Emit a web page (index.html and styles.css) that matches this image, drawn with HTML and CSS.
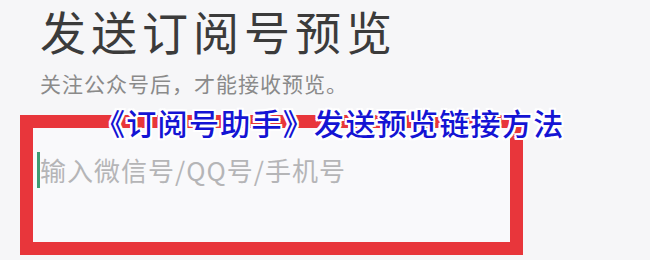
FILE: index.html
```html
<!DOCTYPE html>
<html lang="zh-CN">
<head>
  <meta charset="UTF-8" />
  <title>发送订阅号预览</title>
  <meta name="viewport" content="width=device-width, initial-scale=1.0" />
  <link rel="stylesheet" href="styles.css">
</head>
<body>

<div class="page">
  <h1 class="title">发送订阅号预览</h1>
  <p class="hint">关注公众号后，才能接收预览。</p>

  <div class="field">
    <span class="cursor"></span>
    <span class="placeholder">输入微信号/QQ号/手机号</span>
  </div>

  <!-- caption laid over the screenshot -->
  <div class="caption">《订阅号助手》发送预览链接方法</div>
</div>

</body>
</html>
```

FILE: styles.css
```css
body {
  margin: 0;
  font-family: "Noto Sans CJK SC", "Noto Sans", sans-serif;
  background-color: #f6f6f8;
}
.page {
  position: relative;
  height: 260px;
  padding-left: 20px;
  overflow: hidden;
}
.title {
  margin: 0 0 0 20px;
  font-size: 46px;
  font-weight: 400;
  line-height: 60px;
  letter-spacing: 5px;
  color: #3b3b3b;
}
.hint {
  margin: 11px 0 0 20px;
  font-size: 21px;
  line-height: 24px;
  letter-spacing: 1px;
  color: #8a8a8a;
}
.field {
  box-sizing: border-box;
  width: 503px;
  height: 140px;
  margin-top: 20px;
  padding: 24px 0 0 4px;
  border: 13px solid #e8363b;
  background-color: #f9f9fb;
  display: flex;
  align-items: flex-start;
}
.cursor {
  width: 3px;
  height: 36px;
  background-color: #3f9c73;
}
.placeholder {
  font-size: 26px;
  line-height: 36px;
  letter-spacing: 1px;
  color: #b5b5b7;
}
.caption {
  position: absolute;
  left: 95px;
  top: 104px;
  font-size: 30px;
  font-weight: 500;
  line-height: 36px;
  letter-spacing: 1.3px;
  color: #1414d4;
  text-shadow: -2px 0 #fff, 2px 0 #fff, 0 -2px #fff, 0 2px #fff,
    -2px -2px #fff, 2px 2px #fff, -2px 2px #fff, 2px -2px #fff;
}
```
